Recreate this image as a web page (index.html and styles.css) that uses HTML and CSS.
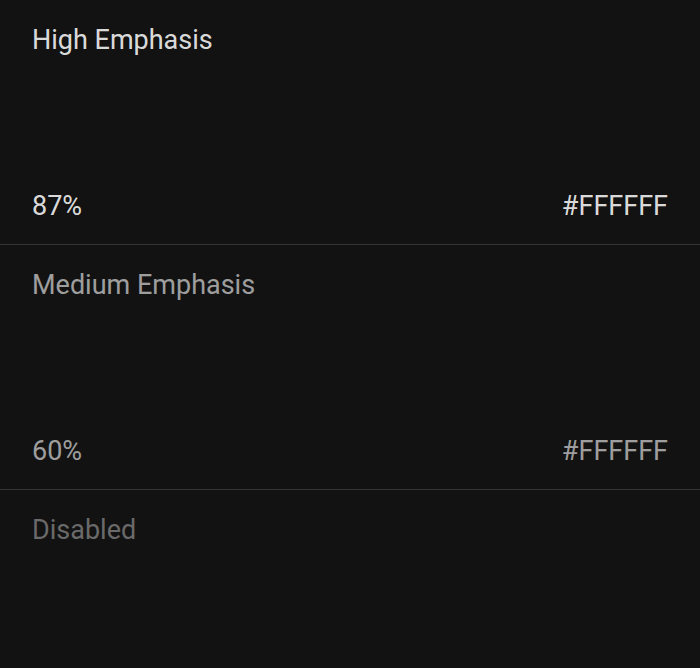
FILE: index.html
```html
<!DOCTYPE html>
<html lang="en">
<head>
<meta charset="utf-8">
<title>Emphasis</title>
<link rel="stylesheet" href="styles.css">
</head>
<body>
<div class="list">
  <section class="swatch high">
    <div class="title">High Emphasis</div>
    <div class="meta"><span>87%</span><span>#FFFFFF</span></div>
  </section>
  <section class="swatch medium">
    <div class="title">Medium Emphasis</div>
    <div class="meta"><span>60%</span><span>#FFFFFF</span></div>
  </section>
  <section class="swatch disabled last">
    <div class="title">Disabled</div>
  </section>
</div>
</body>
</html>
```
FILE: styles.css
```css
html, body {
  margin: 0;
  padding: 0;
  background: #121212;
}
body {
  font-family: Roboto, "Liberation Sans", sans-serif;
  font-size: 27px;
  line-height: 32px;
}
.list {
  display: flex;
  flex-direction: column;
  height: 668px;
  overflow: hidden;
}
.swatch {
  box-sizing: border-box;
  height: 245px;
  flex: 0 0 auto;
  padding: 24px 32px 22px;
  display: flex;
  flex-direction: column;
  justify-content: space-between;
  border-bottom: 1px solid #333333;
}
.swatch.last {
  height: auto;
  flex: 1 1 auto;
  border-bottom: none;
}
.meta {
  display: flex;
  justify-content: space-between;
}
.high { color: rgba(255, 255, 255, 0.87); }
.medium { color: rgba(255, 255, 255, 0.6); }
.disabled { color: rgba(255, 255, 255, 0.38); }
```
